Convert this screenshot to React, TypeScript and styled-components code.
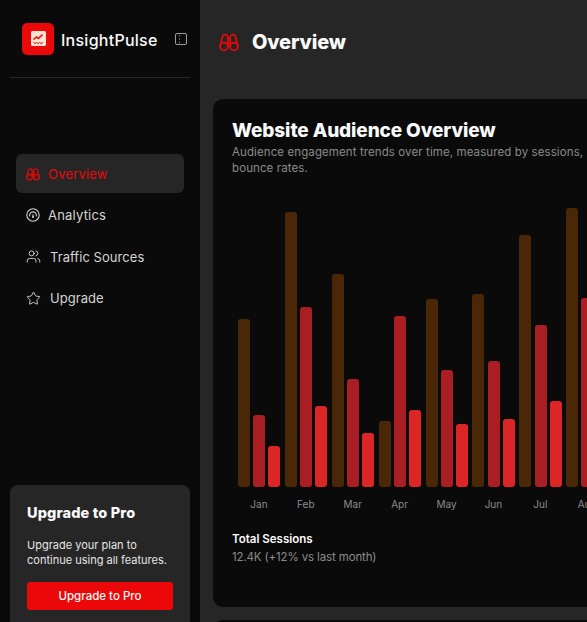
import styled, { createGlobalStyle } from 'styled-components';
import { Users, Star } from 'lucide-react';

const months = [
    { label: 'Jan', a: 168, b: 72, c: 41 },
    { label: 'Feb', a: 275, b: 180, c: 81 },
    { label: 'Mar', a: 213, b: 108, c: 54 },
    { label: 'Apr', a: 66, b: 171, c: 77 },
    { label: 'May', a: 188, b: 117, c: 63 },
    { label: 'Jun', a: 193, b: 126, c: 68 },
    { label: 'Jul', a: 252, b: 162, c: 86 },
    { label: 'Aug', a: 279, b: 189, c: 90 },
    { label: 'Sep', a: 200, b: 120, c: 60 },
];

function BinocularsIcon({ size }: { size: number }) {
    return (
        <svg width={size} height={size} viewBox="0 0 20 20" fill="none" stroke="#ea0808" strokeWidth="1.7" strokeLinecap="round" strokeLinejoin="round">
            <circle cx="5" cy="14.5" r="3.9" />
            <circle cx="15" cy="14.5" r="3.9" />
            <path d="M1.1 14.5 L3.6 4.2 A2.8 2.8 0 0 1 8.9 4.8 V14.5" />
            <path d="M18.9 14.5 L16.4 4.2 A2.8 2.8 0 0 0 11.1 4.8 V14.5" />
            <path d="M8.9 8 H11.1" />
        </svg>
    )
}

function App() {
    return (
        <Page>
            <GlobalStyle />
            <Sidebar>
                <Brand>
                    <LogoBox>
                        <svg width="15" height="15" viewBox="0 0 15 15">
                            <rect width="15" height="15" rx="1.5" fill="#fbe3d3" />
                            <path d="M2.5 8.5 L5.5 6 L7.5 7.5 L11.5 3.5" fill="none" stroke="#ea0808" strokeWidth="1.5" />
                            <path d="M2.5 11.5 L4 12.5 L5.5 11.5 L7 12.5 L8.5 11.5 L10 12.5 L12 11.5" fill="none" stroke="#ea0808" strokeWidth="1" />
                        </svg>
                    </LogoBox>
                    <BrandName>InsightPulse</BrandName>
                    <Toggle>
                        <svg width="12" height="12" viewBox="0 0 12 12" fill="none" stroke="#9a9a9a" strokeWidth="1">
                            <rect x="0.5" y="0.5" width="11" height="11" rx="1.5" />
                            <path d="M4.5 2v1.2M4.5 5.4v1.2M4.5 8.8v1.2" />
                        </svg>
                    </Toggle>
                </Brand>
                <Nav>
                    <NavItem $active>
                        <BinocularsIcon size={14} />
                        <NavLabel>Overview</NavLabel>
                    </NavItem>
                    <NavItem>
                        <svg width="14" height="14" viewBox="0 0 14 14" fill="none" stroke="#d4d4d4" strokeWidth="1.1">
                            <circle cx="7" cy="7" r="6.2" />
                            <path d="M3.8 8.4a3.4 3.4 0 1 1 6.4 0" />
                            <path d="M7 5.6 L7.9 8.6 A1 1 0 1 1 6.1 8.6 Z" fill="#d4d4d4" stroke="none" />
                        </svg>
                        <NavLabel>Analytics</NavLabel>
                    </NavItem>
                    <NavItem>
                        <Users size={15} strokeWidth={1.5} />
                        <NavLabel $wide>Traffic Sources</NavLabel>
                    </NavItem>
                    <NavItem>
                        <Star size={15} strokeWidth={1.5} />
                        <NavLabel $wide>Upgrade</NavLabel>
                    </NavItem>
                </Nav>
                <PromoCard>
                    <PromoTitle>Upgrade to Pro</PromoTitle>
                    <PromoText>Upgrade your plan to continue using all features.</PromoText>
                    <PromoButton>Upgrade to Pro</PromoButton>
                </PromoCard>
            </Sidebar>
            <Main>
                <Header>
                    <BinocularsIcon size={20} />
                    <PageTitle>Overview</PageTitle>
                </Header>
                <Card>
                    <CardTitle>Website Audience Overview</CardTitle>
                    <CardText>Audience engagement trends over time, measured by sessions, users, and bounce rates.</CardText>
                    <Chart>
                        {months.map((m) => (
                            <Group key={m.label}>
                                <Bars>
                                    <Bar $color="#4a2707" style={{ height: m.a }} />
                                    <Bar $color="#a91e22" style={{ height: m.b }} />
                                    <Bar $color="#dc2626" style={{ height: m.c }} />
                                </Bars>
                                <Month>{m.label}</Month>
                            </Group>
                        ))}
                    </Chart>
                    <StatLabel>Total Sessions</StatLabel>
                    <StatValue>12.4K (+12% vs last month)</StatValue>
                </Card>
                <Card />
            </Main>
        </Page>
    )
}
export default App

const GlobalStyle = createGlobalStyle`
    html, body {
        margin: 0;
        height: 622px;
        overflow: hidden;
        background: #262626;
    }
    * {
        box-sizing: border-box;
    }
    body {
        font-family: Inter, "Liberation Sans", sans-serif;
    }
`

const Page = styled.div`
    display: flex;
    width: 587px;
    height: 622px;
    overflow: hidden;
`

const Sidebar = styled.aside`
    flex: 0 0 200px;
    height: 622px;
    background: #0a0a0a;
    padding: 0 10px;
    display: flex;
    flex-direction: column;
`

const Brand = styled.div`
    height: 78px;
    display: flex;
    align-items: center;
    padding: 6px 0 6px 12px;
    border-bottom: 1px solid #262626;
`

const LogoBox = styled.div`
    width: 32px;
    height: 32px;
    border-radius: 5px;
    background: #ea0808;
    display: flex;
    align-items: center;
    justify-content: center;
    flex: none;
`

const BrandName = styled.span`
    margin-left: 7px;
    padding-top: 2px;
    color: #fafafa;
    font-size: 16px;
    font-weight: 500;
    letter-spacing: 0.25px;
    white-space: nowrap;
`

const Toggle = styled.span`
    margin-left: auto;
    margin-right: 3px;
    display: flex;
`

const Nav = styled.nav`
    margin-top: 76px;
    padding: 0 6px;
    display: flex;
    flex-direction: column;
    gap: 2.5px;
`

const NavItem = styled.a<{ $active?: boolean }>`
    height: 39px;
    padding: 0 10px;
    border-radius: 6px;
    display: flex;
    align-items: center;
    gap: 8px;
    background: ${(p) => (p.$active ? '#262626' : 'transparent')};
    color: ${(p) => (p.$active ? '#ea0808' : '#d4d4d4')};
`

const NavLabel = styled.span<{ $wide?: boolean }>`
    font-size: 13px;
    letter-spacing: ${(p) => (p.$wide ? '0.05px' : '0.2px')};
    margin-left: ${(p) => (p.$wide ? '1px' : '0')};
`

const PromoCard = styled.div`
    margin-top: auto;
    height: 137px;
    background: #262626;
    border-radius: 8px 8px 0 0;
    padding: 18px 17px 0;
`

const PromoTitle = styled.h3`
    margin: 0;
    color: #fafafa;
    font-size: 14.5px;
    font-weight: 800;
    letter-spacing: 0.15px;
    line-height: 20px;
`

const PromoText = styled.p`
    margin: 15px 0 0;
    color: #e5e5e5;
    font-size: 11px;
    line-height: 15px;
`

const PromoButton = styled.button`
    display: block;
    width: 100%;
    height: 28px;
    margin-top: 14px;
    border: none;
    border-radius: 3px;
    background: #ea0808;
    color: #fafafa;
    font-family: inherit;
    font-size: 11.5px;
    font-weight: 500;
`

const Main = styled.main`
    flex: 1 1 auto;
    min-width: 0;
    padding: 0 0 0 13px;
`

const Header = styled.header`
    height: 99px;
    padding: 0 0 15px 6px;
    display: flex;
    align-items: center;
    gap: 13px;
`

const PageTitle = styled.h1`
    margin: 0;
    color: #fafafa;
    font-size: 20px;
    font-weight: 800;
    letter-spacing: -0.15px;
`

const Card = styled.section`
    width: 760px;
    height: 508px;
    margin-bottom: 13px;
    padding: 20px 19px;
    background: #0a0a0a;
    border-radius: 10px;
`

const CardTitle = styled.h2`
    margin: 0;
    color: #fafafa;
    font-size: 19px;
    font-weight: 800;
    letter-spacing: -0.12px;
    line-height: 24px;
`

const CardText = styled.p`
    margin: 1px 0 0;
    width: 425px;
    color: #8a8a8a;
    font-size: 11.5px;
    letter-spacing: 0.1px;
    line-height: 16px;
`

const Chart = styled.div`
    margin-top: 25px;
    display: flex;
    align-items: flex-end;
    padding-left: 6px;
    height: 310px;
`

const Group = styled.div`
    flex: 0 0 46.9px;
    display: flex;
    flex-direction: column;
    align-items: stretch;
`

const Bars = styled.div`
    display: flex;
    align-items: flex-end;
    gap: 3.2px;
`

const Bar = styled.div<{ $color: string }>`
    width: 12px;
    border-radius: 3px;
    background: ${(p) => p.$color};
`

const Month = styled.span`
    margin-top: 11px;
    padding-right: 5px;
    text-align: center;
    color: #8a8a8a;
    font-size: 10px;
    line-height: 13px;
`

const StatLabel = styled.div`
    margin-top: 20px;
    color: #fafafa;
    font-size: 11.5px;
    font-weight: 600;
    line-height: 16px;
`

const StatValue = styled.div`
    margin-top: 2px;
    color: #8a8a8a;
    font-size: 11.5px;
    letter-spacing: -0.14px;
    line-height: 16px;
`
